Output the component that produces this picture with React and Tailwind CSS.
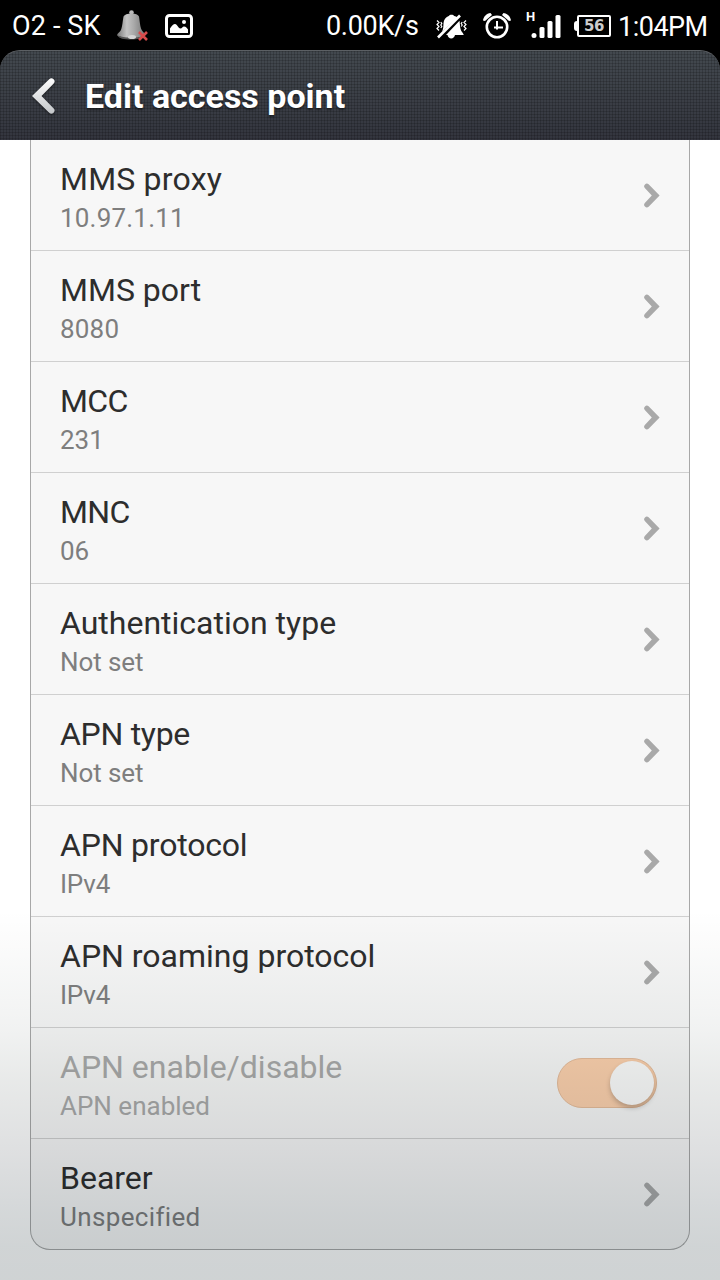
const SETTINGS = [
  { title: "MMS proxy", value: "10.97.1.11", titleSpacing: "tracking-[0.200px]", valueSpacing: "tracking-[0.200px]" },
  { title: "MMS port", value: "8080", valueSpacing: "tracking-[0.200px]" },
  { title: "MCC", value: "231", titleSpacing: "tracking-[-0.600px]" },
  { title: "MNC", value: "06", titleSpacing: "tracking-[-0.600px]" },
  { title: "Authentication type", value: "Not set", valueSpacing: "tracking-[-0.100px]" },
  { title: "APN type", value: "Not set", titleSpacing: "tracking-[-0.300px]", valueSpacing: "tracking-[-0.100px]" },
  { title: "APN protocol", value: "IPv4", titleSpacing: "tracking-[-0.200px]", valueSpacing: "tracking-[-0.200px]" },
  { title: "APN roaming protocol", value: "IPv4", valueSpacing: "tracking-[-0.200px]" },
  { title: "APN enable/disable", value: "APN enabled", toggle: true },
  { title: "Bearer", value: "Unspecified", valueSpacing: "tracking-[0.350px]" },
];

function BellIcon() {
  return (
    <svg className="ml-[14px] h-8 w-8 shrink-0" viewBox="0 0 32 32">
      <defs>
        <linearGradient id="bell" x1="0" x2="1" y1="0" y2="0">
          <stop offset="0" stopColor="#777" />
          <stop offset=".35" stopColor="#c4c4c4" />
          <stop offset=".6" stopColor="#aaa" />
          <stop offset="1" stopColor="#777" />
        </linearGradient>
      </defs>
      <circle cx="15.500" cy="2.500" r="2.300" fill="#bbb" />
      <path
        d="M7.500 6.500c1-2 4-3 8-3s6.500 1 7.500 3c.8 5 1 9 2 12 1 2.500 2.500 3.500 3.500 5 .8 1.500 0 2.500-2 3.300-6 2-16 2-22 0C1.500 26.500.500 25.500 1.500 24c1-1.500 3-2.500 3.800-5 1.200-3.500 1.200-7 2.200-12.500z"
        fill="url(#bell)"
      />
      <path d="M2 25.500c7 2.800 18 2.800 26 .5-1 2.700-6 3.500-13 3.500s-12.500-1-13-4z" fill="#555" />
      <ellipse cx="16" cy="27" rx="4" ry="2" fill="#d5d5d5" />
      <path d="M23 22l8 8M31 22l-8 8" stroke="#d84b4b" strokeWidth="2.600" />
    </svg>
  );
}

function PictureIcon() {
  return (
    <svg className="ml-[17px] h-6 w-7 shrink-0" viewBox="0 0 28 24">
      <rect x="1.500" y="1.500" width="25" height="21" rx="3" fill="none" stroke="#fff" strokeWidth="3" />
      <path d="M5 19v-4.500c1.500-2.500 3.500-4.500 5-4.500 2.500 0 3 4.500 5.500 4.500 1.500 0 2-2 3.500-2 2 0 3 1.500 4 3V19z" fill="#fff" />
      <circle cx="19" cy="8" r="2" fill="#fff" />
    </svg>
  );
}

function MutedBellIcon() {
  return (
    <svg className="h-[25px] w-[31px] shrink-0" viewBox="0 0 31 25" fill="#fff">
      <path d="M6 17.500C7.500 15 7.300 12 7.500 9.500 8 5 10 3 12.800 2 13.300 1 14.300.700 15.500.700s2.200.3 2.700 1.300c1.300.2 2.300.8 3.200 1.600z" />
      <path d="M23.500 6.800c.5 3.500.4 6.500 1.300 9 .7 2 2.200 3.200 3 5.200H10z" />
      <path d="M11.500 21h7.500c-.5 2-2 3.500-3.800 3.500s-3.200-1.500-3.700-3.500z" />
      <path d="M2 23.500L24 1.500" stroke="#fff" strokeWidth="2.600" fill="none" />
      <path
        d="M1 6.500l2 2-2 2 2 2-2 2 2 2M4.800 8l1 1.500-1 1.500 1 1.500-1 1.500M26.200 8l-1 1.500 1 1.500-1 1.500M30 6.500l-2 2 2 2-2 2 2 2-2 2"
        stroke="#fff"
        strokeWidth="1.200"
        fill="none"
      />
    </svg>
  );
}

function AlarmIcon() {
  return (
    <svg className="ml-[16px] h-[26px] w-7 shrink-0" viewBox="0 0 28 26" fill="none" stroke="#fff">
      <circle cx="14" cy="14" r="10.200" strokeWidth="2.600" />
      <path d="M14 8v6.500h6M14 14.500h-3M14 14v2.500" strokeWidth="2" />
      <path d="M0 7.500C.5 3.500 3.500.5 7.500 0l1.500 2-7 6z" fill="#fff" stroke="none" />
      <path d="M28 7.500C27.500 3.500 24.500.5 20.500 0L19 2l7 6z" fill="#fff" stroke="none" />
    </svg>
  );
}

function SignalIcon() {
  return (
    <div className="relative ml-[15px] h-7 w-[36px] shrink-0">
      <span className="absolute left-0 top-0 text-[13px] font-bold leading-[10px]">H</span>
      <svg className="h-7 w-[36px]" viewBox="0 0 36 28" fill="#fff">
        <rect x="5.500" y="21" width="5" height="5" rx="2.500" />
        <rect x="13.500" y="15" width="5" height="11" rx="1.500" />
        <rect x="21.500" y="9" width="5" height="17" rx="1.500" />
        <rect x="29.500" y="3" width="5" height="23" rx="1.500" />
      </svg>
    </div>
  );
}

function Battery({ level }) {
  return (
    <div className="ml-[12px] flex shrink-0 items-center">
      <div className="h-[10px] w-[3px] rounded-l-sm bg-white" />
      <div className="flex h-[22px] w-[34px] items-center justify-center rounded-[2px] border-2 border-white font-['DejaVu_Sans'] text-[15px] font-bold leading-none tracking-[-0.500px] text-[#ccc]">
        {level}
      </div>
    </div>
  );
}

function StatusBar() {
  return (
    <div className="flex h-[50px] items-center pl-3 pr-3 pt-[2px] text-[27px] text-white">
      <span className="w-[90px] whitespace-nowrap pt-px tracking-[0.150px]">O2 - SK</span>
      <BellIcon />
      <PictureIcon />
      <span className="ml-[133px] w-[110px] whitespace-nowrap pt-px tracking-[-0.300px]">0.00K/s</span>
      <MutedBellIcon />
      <AlarmIcon />
      <SignalIcon />
      <Battery level={56} />
      <span className="ml-[7px] whitespace-nowrap pt-[2px] tracking-[-0.500px]">1:04PM</span>
    </div>
  );
}

function Header() {
  return (
    <header className="flex h-[90px] items-center rounded-t-[20px] border-t border-[#5c6064] bg-[linear-gradient(rgba(0,0,0,0.160)_1px,transparent_1px),linear-gradient(90deg,rgba(0,0,0,0.160)_1px,transparent_1px),linear-gradient(#43494f,#33353e)] bg-[size:3px_3px,3px_3px,100%_100%] pl-8">
      <svg className="h-9 w-[23px] shrink-0 drop-shadow-[0_1px_1px_rgba(0,0,0,0.5)]" viewBox="0 0 23 36">
        <defs>
          <linearGradient id="back" x1="0" x2="0" y1="0" y2="1">
            <stop offset="0" stopColor="#fff" />
            <stop offset="1" stopColor="#c3c6c9" />
          </linearGradient>
        </defs>
        <path
          d="M17.200 1.200a2.900 2.900 0 0 1 4.300 4.500L9.500 18l12 12.300a2.900 2.900 0 0 1-4.300 4.500L0 18z"
          fill="url(#back)"
        />
      </svg>
      <h1 className="ml-[30px] whitespace-nowrap text-[34px] font-bold leading-none text-white [text-shadow:0_2px_2px_rgba(0,0,0,0.4)]">
        Edit access point
      </h1>
    </header>
  );
}

function Chevron() {
  return (
    <svg className="mr-[29px] h-[25px] w-4 shrink-0" viewBox="0 0 16 25" fill="#a9a9a9">
      <path d="M4.600 1.200A2.700 2.700 0 0 0 .8 5l7 7.500-7 7.500a2.700 2.700 0 0 0 3.800 3.800L15.600 12.500z" />
    </svg>
  );
}

function Toggle() {
  return (
    <div className="mr-[32px] flex h-[50px] w-[100px] items-center justify-end rounded-full border border-[#e6bc9b] bg-[#fcd0ad] pr-[2px]">
      <div className="size-11 rounded-full bg-[#fbfbfb] shadow-[0_3px_5px_rgba(0,0,0,0.22)]" />
    </div>
  );
}

function Row({ title, value, toggle, titleSpacing = "", valueSpacing = "" }) {
  return (
    <div className="flex h-[111px] items-center justify-between border-b border-[#d0d0d0] pl-[29px] last:h-[110px] last:border-b-0">
      <div className={`pt-2 ${toggle ? "text-[#a9a9a9]" : "text-[#2d2d2d]"}`}>
        <div className={`whitespace-nowrap text-[32px] leading-[38px] ${titleSpacing}`}>{title}</div>
        <div
          className={`whitespace-nowrap text-[26px] leading-10 ${toggle ? "" : "text-[#7e7e7e]"} ${valueSpacing}`}
        >
          {value}
        </div>
      </div>
      {toggle ? <Toggle /> : <Chevron />}
    </div>
  );
}

export default function App() {
  return (
    <div className="relative h-[1280px] w-[720px] overflow-hidden bg-black font-['Roboto',sans-serif]">
      <StatusBar />
      <Header />
      <main className="h-[1140px] bg-white px-[30px]">
        <div className="rounded-b-[20px] border border-t-0 border-[#a8a8a8] bg-[#f7f7f7]">
          {SETTINGS.map((item) => (
            <Row key={item.title} {...item} />
          ))}
        </div>
      </main>

      {/* shade rising from the bottom edge */}
      <div
        aria-hidden="true"
        className="pointer-events-none absolute inset-x-0 bottom-0 h-[370px] bg-[linear-gradient(rgba(0,24,18,0),rgba(0,24,18,0.056)_32%,rgba(0,18,12,0.090)_46%,rgba(0,10,18,0.125)_64%,rgba(0,20,28,0.168)_82%,rgba(0,20,26,0.185)_91%,rgba(0,20,26,0.190))]"
      />
    </div>
  );
}
